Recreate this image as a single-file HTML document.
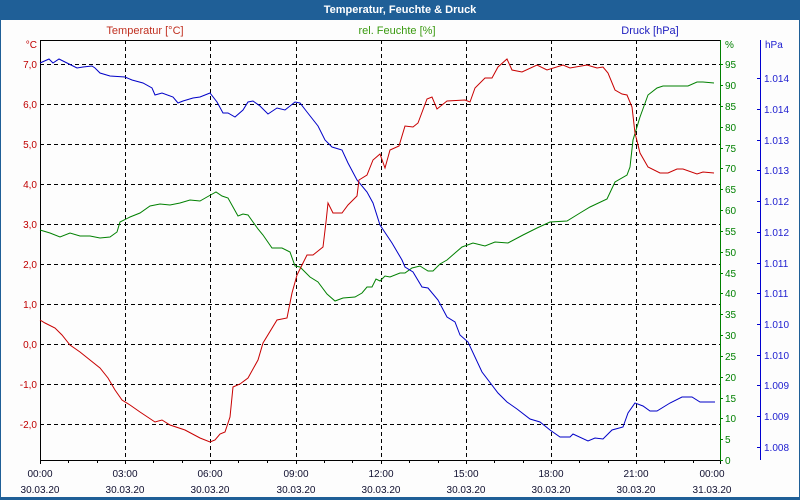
<!DOCTYPE html>
<html><head><meta charset="utf-8"><style>
html,body{margin:0;padding:0;width:800px;height:500px;overflow:hidden;background:#fff}
svg{display:block;font-family:"Liberation Sans",sans-serif}
</style></head><body>
<svg width="800" height="500" viewBox="0 0 800 500" xmlns="http://www.w3.org/2000/svg">
<rect x="0" y="0" width="800" height="500" fill="#1f5f97"/>
<rect x="1" y="20" width="798" height="477" fill="#fdfdfd"/>
<text x="400" y="13" fill="#fff" font-size="11" font-weight="bold" text-anchor="middle">Temperatur, Feuchte &amp; Druck</text>
<text x="145" y="34" fill="#c03020" font-size="11" text-anchor="middle">Temperatur [°C]</text>
<text x="397" y="34" fill="#3a9a10" font-size="11" text-anchor="middle">rel. Feuchte [%]</text>
<text x="650" y="34" fill="#2020c0" font-size="11" text-anchor="middle">Druck [hPa]</text>
<g stroke="#000" stroke-width="1" stroke-dasharray="4,3" fill="none">
<path d="M40 64.5H720M40 104.5H720M40 144.5H720M40 184.5H720M40 224.5H720M40 264.5H720M40 304.5H720M40 344.5H720M40 384.5H720M40 424.5H720"/>
<path d="M125.5 40V460M210.5 40V460M296.5 40V460M381.5 40V460M466.5 40V460M551.5 40V460M636.5 40V460"/>
</g>
<path d="M40.5 40V460.5H720M40 40.5H720" stroke="#000" fill="none"/>
<path d="M40.5 460v4M68.5 460v3M97.5 460v3M125.5 460v4M153.5 460v3M182.5 460v3M210.5 460v4M238.5 460v3M267.5 460v3M296.5 460v4M324.5 460v3M352.5 460v3M381.5 460v4M409.5 460v3M438.5 460v3M466.5 460v4M494.5 460v3M523.5 460v3M551.5 460v4M579.5 460v3M608.5 460v3M636.5 460v4M664.5 460v3M693.5 460v3M720.5 460v4" stroke="#000"/>
<path d="M720.5 40V460.5M720 64.5h3M720 85.5h3M720 106.5h3M720 127.5h3M720 148.5h3M720 168.5h3M720 189.5h3M720 210.5h3M720 231.5h3M720 252.5h3M720 273.5h3M720 293.5h3M720 314.5h3M720 335.5h3M720 356.5h3M720 377.5h3M720 398.5h3M720 418.5h3M720 439.5h3M720 460.5h3" stroke="#008000" fill="none"/>
<path d="M760.5 40V460M757 78.5h3M757 109.5h3M757 140.5h3M757 170.5h3M757 201.5h3M757 232.5h3M757 263.5h3M757 293.5h3M757 324.5h3M757 355.5h3M757 385.5h3M757 416.5h3M757 447.5h3" stroke="#0000d0" fill="none"/>
<g fill="#c00000" font-size="10" text-anchor="end">
<text x="37" y="48">°C</text><text x="37" y="68">7,0</text><text x="37" y="108">6,0</text><text x="37" y="148">5,0</text><text x="37" y="188">4,0</text><text x="37" y="228">3,0</text><text x="37" y="268">2,0</text><text x="37" y="308">1,0</text><text x="37" y="348">0,0</text><text x="37" y="388">-1,0</text><text x="37" y="428">-2,0</text>
</g>
<g fill="#008000" font-size="10">
<text x="725" y="48">%</text><text x="725" y="68">95</text><text x="725" y="89">90</text><text x="725" y="110">85</text><text x="725" y="131">80</text><text x="725" y="152">75</text><text x="725" y="172">70</text><text x="725" y="193">65</text><text x="725" y="214">60</text><text x="725" y="235">55</text><text x="725" y="256">50</text><text x="725" y="277">45</text><text x="725" y="297">40</text><text x="725" y="318">35</text><text x="725" y="339">30</text><text x="725" y="360">25</text><text x="725" y="381">20</text><text x="725" y="402">15</text><text x="725" y="422">10</text><text x="725" y="443">5</text><text x="725" y="464">0</text>
</g>
<g fill="#2020d0" font-size="10">
<text x="765" y="48">hPa</text><text x="764" y="82">1.014</text><text x="764" y="113">1.014</text><text x="764" y="144">1.013</text><text x="764" y="174">1.013</text><text x="764" y="205">1.012</text><text x="764" y="236">1.012</text><text x="764" y="267">1.011</text><text x="764" y="297">1.011</text><text x="764" y="328">1.010</text><text x="764" y="359">1.010</text><text x="764" y="389">1.009</text><text x="764" y="420">1.009</text><text x="764" y="451">1.008</text>
</g>
<g fill="#101030" font-size="10" text-anchor="middle">
<text x="40" y="477">00:00</text><text x="40" y="493">30.03.20</text>
<text x="125" y="477">03:00</text><text x="125" y="493">30.03.20</text>
<text x="210" y="477">06:00</text><text x="210" y="493">30.03.20</text>
<text x="296" y="477">09:00</text><text x="296" y="493">30.03.20</text>
<text x="381" y="477">12:00</text><text x="381" y="493">30.03.20</text>
<text x="466" y="477">15:00</text><text x="466" y="493">30.03.20</text>
<text x="551" y="477">18:00</text><text x="551" y="493">30.03.20</text>
<text x="636" y="477">21:00</text><text x="636" y="493">30.03.20</text>
<text x="712" y="477">00:00</text><text x="712" y="493">31.03.20</text>
</g>
<g fill="none" stroke-width="1">
<polyline stroke="#008000" points="40,230 50,233 60,237 70,233 80,236 90,236 100,238 110,237 117,232 120,222 130,217 140,213 150,206 160,204 170,205 180,203 190,200 200,201 207,197 216,192 222,196 228,198 238,216 243,214 248,215 258,229 263,235 272,248 282,248 290,252 295,266 300,267 310,277 318,282 327,294 335,301 343,298 355,297 362,293 367,287 372,287 376,279 380,281 385,276 390,277 400,273 405,273 412,268 420,266 428,271 433,271 440,264 447,260 455,253 462,247 473,243 485,246 495,242 508,243 523,235 537,228 550,222 567,221 580,213 590,207 607,199 615,182 627,175 630,167 633,140 640,117 648,95 657,88 663,86 688,86 697,82 703,82 714,83"/>
<polyline stroke="#0000c8" points="40,63 49,59 53,63 59,59 67,63 77,68 83,67 92,66 95,68 100,73 110,76 125,77 132,80 143,83 152,88 155,95 162,93 173,97 178,103 183,101 193,98 200,97 210,93 217,102 223,113 228,113 235,117 243,110 248,102 253,101 260,106 268,114 277,108 285,110 295,102 300,103 307,112 318,126 325,140 332,147 342,150 348,163 357,180 367,192 373,203 380,225 392,243 402,260 405,267 413,272 422,287 428,288 438,300 447,317 455,322 460,335 468,342 482,372 498,393 507,402 517,409 530,419 540,422 550,430 560,437 570,437 573,434 588,441 595,438 603,439 612,430 623,427 628,413 635,403 643,406 650,411 657,411 670,403 682,397 692,397 700,402 710,402 715,402"/>
<polyline stroke="#c80000" points="40,320 45,323 55,328 62,335 70,345 80,352 90,360 100,368 108,378 115,390 122,400 130,405 140,412 155,422 162,420 170,425 185,430 200,438 210,442 215,440 220,434 225,432 230,417 233,387 240,384 248,378 258,360 263,343 277,320 287,318 292,293 297,275 307,255 313,255 323,247 326,222 328,203 333,213 342,213 348,205 357,196 359,180 367,175 373,160 380,154 385,168 390,150 399,146 405,126 413,127 418,123 427,99 432,97 437,109 447,101 465,100 470,102 475,88 485,78 492,78 498,67 507,59 512,70 522,72 537,65 547,70 563,65 570,68 587,65 597,68 603,67 608,73 615,90 622,94 627,95 632,107 635,133 640,153 648,167 660,173 668,173 677,169 683,169 697,174 703,172 714,173"/>
</g>
</svg>
</body></html>
